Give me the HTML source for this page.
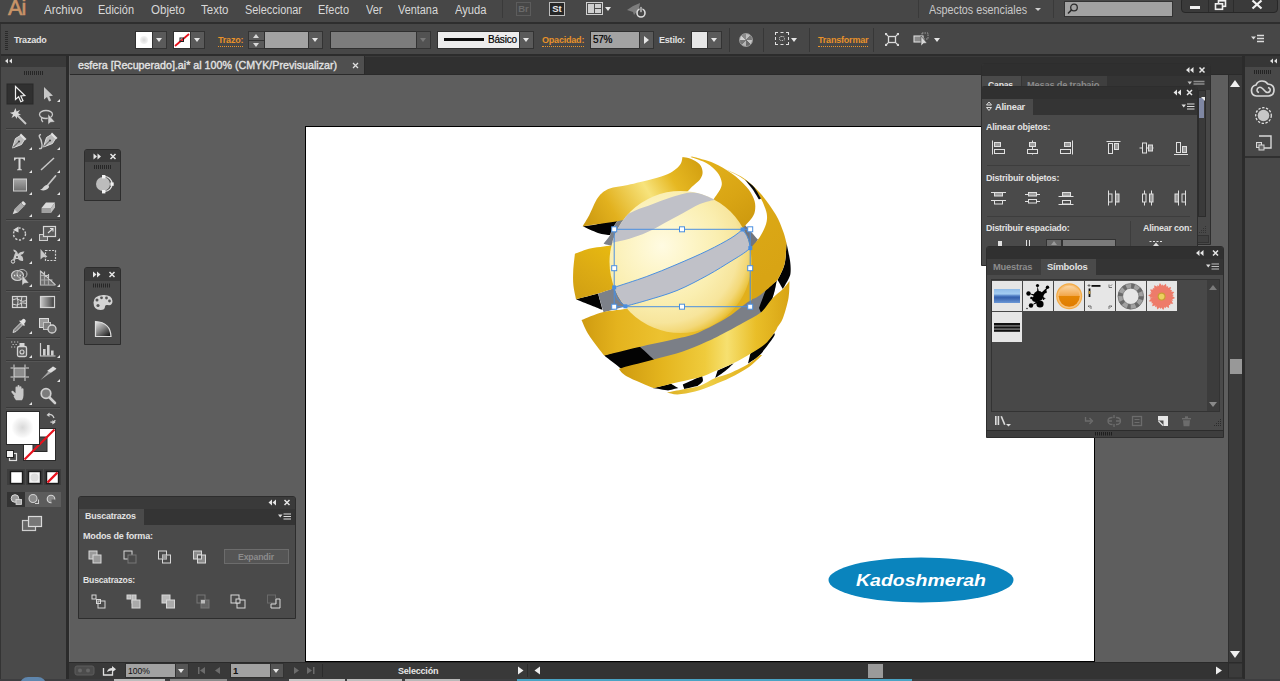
<!DOCTYPE html>
<html lang="es">
<head>
<meta charset="utf-8">
<title>Adobe Illustrator - esfera</title>
<style>
*{box-sizing:border-box;margin:0;padding:0}
html,body{width:1280px;height:681px;overflow:hidden;background:#5e5e5e;font-family:"Liberation Sans","DejaVu Sans",sans-serif;color:#dcdcdc;font-size:11px}
.abs{position:absolute}
#root{position:relative;width:1280px;height:681px;overflow:hidden;background:#5e5e5e}
/* menu bar */
#menubar{left:0;top:0;width:1280px;height:23px;background:#474747}
#menubar .mi{position:absolute;top:3px;font-size:12px;color:#d8d8d8;line-height:15px;white-space:nowrap;transform-origin:0 50%;display:inline-block}
#mline{left:0;top:22px;width:1280px;height:2px;background:#2e2e2e}
#ctrlbar{left:0;top:24px;width:1280px;height:31px;background:#474747}
#cline{left:0;top:54px;width:1280px;height:2px;background:#2c2c2c}
.lbl{position:absolute;transform-origin:0 50%;display:inline-block;font-size:9px;color:#e2e2e2;white-space:nowrap;line-height:12px;font-weight:bold;letter-spacing:-0.2px}
.olbl{position:absolute;transform-origin:0 50%;display:inline-block;font-size:9px;color:#e8922a;white-space:nowrap;line-height:12px;font-weight:bold;border-bottom:1px dotted #e8922a;letter-spacing:-0.2px}
.btn{position:absolute;background:#5a5a5a;border:1px solid #333}
.inp{position:absolute;background:#a3a3a3;border:1px solid #2f2f2f}
.tri-d{position:absolute;width:0;height:0;border-left:4px solid transparent;border-right:4px solid transparent;border-top:5px solid #e6e6e6}
.vsep{position:absolute;width:1px;background:#373737;top:28px;height:24px}
/* tab bar */
#tabbar{left:70px;top:56px;width:1173px;height:19px;background:#303030;border-top:1px solid #3a3a3a;border-bottom:1px solid #2a2a2a}
#tab{left:70px;top:56px;width:295px;height:18px;background:#4f4f4f;border-right:1px solid #2a2a2a}
/* toolbar */
#tools{left:0;top:56px;width:66px;height:625px;background:#4a4a4a}
#toolsb{left:66px;top:56px;width:3px;height:625px;background:#2b2b2b}
#toolsh{left:69px;top:75px;width:1px;height:587px;background:#686868}
#toolshead{left:0;top:56px;width:66px;height:11px;background:#3a3a3a}
.tsep{position:absolute;left:6px;width:54px;height:1px;background:#3b3b3b;border-bottom:1px solid #555}
/* artboard */
#art{left:305px;top:126px;width:790px;height:536px;background:#fff;border:1px solid #000}
/* panels */
.panel{position:absolute;background:#4a4a4a;border:1px solid #2d2d2d}
.phead{position:absolute;left:0;top:0;right:0;height:11px;background:#3a3a3a}
.ptabs{position:absolute;left:0;right:0;background:#3c3c3c}
.ptab{position:absolute;background:#4a4a4a;color:#e2e2e2;font-size:9.5px;font-weight:bold;line-height:14px;white-space:nowrap}
.ptxt{position:absolute;transform-origin:0 50%;display:inline-block;font-size:9.5px;color:#e2e2e2;white-space:nowrap;line-height:12px;font-weight:bold;letter-spacing:-0.2px}
svg{position:absolute;overflow:visible}
</style>
</head>
<body>
<div id="root">
<!--CANVAS-->
<!--ARTBOARD-->
<div id="art" class="abs"></div>
<!--ART-->
<svg id="artsvg" style="left:0;top:0" width="1280" height="681" viewBox="0 0 1280 681">
<defs>
<linearGradient id="bk1" gradientUnits="userSpaceOnUse" x1="583" y1="0" x2="622" y2="0"><stop offset="0" stop-color="#000"/><stop offset=".7" stop-color="#0a0a0a"/><stop offset="1" stop-color="#6d7077"/></linearGradient>
<linearGradient id="bk2" gradientUnits="userSpaceOnUse" x1="577" y1="0" x2="622" y2="0"><stop offset="0" stop-color="#000"/><stop offset=".45" stop-color="#060606"/><stop offset=".6" stop-color="#7b7f87"/><stop offset="1" stop-color="#8e9299"/></linearGradient>
<linearGradient id="bk3" gradientUnits="userSpaceOnUse" x1="604" y1="0" x2="778" y2="0"><stop offset="0" stop-color="#000"/><stop offset=".2" stop-color="#050505"/><stop offset=".3" stop-color="#7a7e86"/><stop offset=".9" stop-color="#7d8189"/><stop offset=".93" stop-color="#050505"/><stop offset="1" stop-color="#000"/></linearGradient>
<linearGradient id="gR1" gradientUnits="userSpaceOnUse" x1="585" y1="230" x2="700" y2="160"><stop offset="0" stop-color="#c9960e"/><stop offset=".25" stop-color="#e2b11e"/><stop offset=".55" stop-color="#f7e37c"/><stop offset=".75" stop-color="#e6b822"/><stop offset="1" stop-color="#d29f10"/></linearGradient>
<linearGradient id="gR2" gradientUnits="userSpaceOnUse" x1="700" y1="160" x2="755" y2="240"><stop offset="0" stop-color="#e3b21c"/><stop offset=".5" stop-color="#d9a514"/><stop offset="1" stop-color="#c8940c"/></linearGradient>
<linearGradient id="gR3" gradientUnits="userSpaceOnUse" x1="700" y1="158" x2="785" y2="260"><stop offset="0" stop-color="#e8bb28"/><stop offset=".5" stop-color="#dca916"/><stop offset="1" stop-color="#d8a414"/></linearGradient>
<linearGradient id="gR3b" gradientUnits="userSpaceOnUse" x1="752" y1="0" x2="782" y2="0"><stop offset="0" stop-color="#d09c0e"/><stop offset=".6" stop-color="#e4b41e"/><stop offset="1" stop-color="#dcaa18"/></linearGradient>
<linearGradient id="gL1" gradientUnits="userSpaceOnUse" x1="574" y1="300" x2="612" y2="246"><stop offset="0" stop-color="#cf9e12"/><stop offset=".5" stop-color="#dcab14"/><stop offset="1" stop-color="#e8ba10"/></linearGradient>
<linearGradient id="gL2" gradientUnits="userSpaceOnUse" x1="582" y1="0" x2="758" y2="0"><stop offset="0" stop-color="#cf9b10"/><stop offset=".2" stop-color="#e4b31e"/><stop offset=".45" stop-color="#ecc230"/><stop offset="1" stop-color="#e0ad18"/></linearGradient>
<linearGradient id="gL3" gradientUnits="userSpaceOnUse" x1="620" y1="0" x2="790" y2="0"><stop offset="0" stop-color="#cf9b10"/><stop offset=".25" stop-color="#e4b51e"/><stop offset=".5" stop-color="#efcb3c"/><stop offset=".63" stop-color="#f6e070"/><stop offset=".8" stop-color="#e9be28"/><stop offset="1" stop-color="#d8a414"/></linearGradient>
<linearGradient id="gL4" gradientUnits="userSpaceOnUse" x1="650" y1="0" x2="790" y2="0"><stop offset="0" stop-color="#d6a212"/><stop offset=".4" stop-color="#efcf48"/><stop offset=".7" stop-color="#e3b21e"/><stop offset="1" stop-color="#d8a414"/></linearGradient>
<radialGradient id="sph" gradientUnits="userSpaceOnUse" cx="662" cy="246" r="96"><stop offset="0" stop-color="#fffbe2"/><stop offset=".3" stop-color="#fdf5c8"/><stop offset=".6" stop-color="#faeeb0"/><stop offset=".8" stop-color="#f7e59c"/><stop offset=".9" stop-color="#f3d878"/><stop offset=".96" stop-color="#ecc84a"/><stop offset="1" stop-color="#e6b92e"/></radialGradient>
<clipPath id="cclip"><circle cx="680.5" cy="262" r="71"/></clipPath>
</defs>
<path d="M582.6 226.3 C585.2 225.9 591.8 225.5 598.0 224.0 C604.2 222.5 616.3 218.6 620.0 217.5 L620.0 217.5 C618.7 219.3 614.0 225.6 612.4 228.5 C610.8 231.4 610.6 234.0 610.2 235.1 L610.2 235.1 C608.2 234.7 602.6 234.4 598.0 232.9 C593.4 231.4 585.2 227.4 582.6 226.3 Z" fill="#030303" />
<path d="M620.0 217.5 C618.7 219.3 614.0 225.6 612.4 228.5 C610.8 231.4 611.7 232.5 610.2 235.1 C608.7 237.7 604.7 242.4 603.6 243.8 L603.6 243.8 C605.5 244.3 613.0 246.4 614.9 246.9 L614.9 246.9 C615.5 244.4 616.7 236.5 618.6 231.8 C620.5 227.0 624.9 220.7 626.1 218.5 L626.1 218.5 C625.1 218.3 621.0 217.7 620.0 217.5 Z" fill="#7d8189" />
<path d="M576.0 299.3 C579.7 298.3 594.3 294.5 598.0 293.5 L598.0 293.5 C598.8 296.2 601.8 307.2 602.5 310.0 L602.5 310.0 C600.6 309.3 595.8 307.4 591.4 305.6 C587.0 303.8 578.6 300.4 576.0 299.3 Z" fill="#030303" />
<path d="M598.0 293.5 C601.3 292.4 614.4 288.1 617.7 287.0 L617.7 287.0 C618.2 288.6 618.7 293.1 620.5 296.2 C622.2 299.3 626.8 303.9 628.1 305.4 L628.1 305.4 C624.0 306.6 607.7 311.1 603.6 312.2 L603.6 312.2 C602.7 309.1 598.9 296.6 598.0 293.5 Z" fill="#7d8189" />
<path d="M604.2 353.0 C609.8 351.5 627.1 346.3 638.0 344.0 C648.9 341.7 659.3 341.5 669.4 339.0 C679.5 336.5 689.0 333.2 698.8 329.0 C708.6 324.8 719.2 319.2 728.0 314.0 C736.8 308.8 745.3 302.1 751.6 298.0 C757.9 293.9 761.8 292.5 766.0 289.6 C770.2 286.7 774.9 282.3 776.7 280.8 L776.7 280.8 C776.0 283.7 774.8 292.7 772.3 298.4 C769.8 304.1 763.7 312.2 762.0 315.0 L762.0 315.0 C758.8 316.8 750.9 321.5 742.8 326.0 C734.7 330.5 723.3 337.2 713.5 342.0 C703.7 346.8 693.5 351.2 684.0 354.5 C674.5 357.8 667.0 359.6 656.6 362.0 C646.2 364.4 627.5 367.8 621.7 369.0 L621.7 369.0 C618.8 366.3 607.1 355.7 604.2 353.0 Z" fill="#7b7f87" />
<path d="M604.2 355.5 C609.8 353.8 632.4 346.8 638.0 345.0 L638.0 345.0 C641.1 347.8 653.5 359.2 656.6 362.0 L656.6 362.0 C650.8 363.2 627.5 367.8 621.7 369.0 L621.7 369.0 C618.8 366.8 607.1 357.8 604.2 355.5 Z" fill="#030303" />
<path d="M766.0 289.6 C767.8 288.1 774.9 282.3 776.7 280.8 L776.7 280.8 C776.0 283.7 774.8 292.7 772.3 298.4 C769.8 304.1 763.7 312.2 762.0 315.0 L762.0 315.0 C761.5 313.8 759.5 309.2 759.0 308.0 L759.0 308.0 C760.2 304.9 764.8 292.7 766.0 289.6 Z" fill="#030303" />
<path d="M745.0 225.0 C747.2 227.4 755.8 237.2 758.0 239.6 L758.0 239.6 C757.0 241.3 753.0 248.3 752.0 250.0 L748.1 250.7 C747.6 248.8 746.3 243.3 745.2 239.3 C744.1 235.4 742.1 229.0 741.5 227.0 Z" fill="#71757d" />
<path d="M786.5 243.0 C787.1 245.9 789.3 255.7 790.0 260.5 C790.7 265.3 790.8 269.1 790.6 272.0 C790.4 274.9 790.3 275.2 789.0 278.0 C787.7 280.8 783.9 287.2 782.9 289.0 L782.9 289.0 C782.0 287.5 778.5 281.5 777.6 280.0 L777.6 280.0 C778.8 277.3 783.1 270.2 784.6 264.0 C786.1 257.8 786.2 246.5 786.5 243.0 Z" fill="#030303" />
<path d="M652.7 388.1 C655.8 387.4 668.0 384.4 671.0 383.7 L671.0 383.7 C672.2 384.4 677.2 387.4 678.4 388.1 L678.4 388.1 C676.7 388.5 669.8 390.2 668.1 390.6 L668.1 390.6 C665.5 390.2 655.3 388.5 652.7 388.1 Z" fill="#030303" />
<path d="M682.8 384.5 C686.0 383.0 698.8 377.2 702.0 375.7 L702.0 375.7 C702.1 376.6 703.5 379.6 702.8 381.3 C702.0 383.0 698.4 385.2 697.5 386.0 L697.5 386.0 C695.3 386.5 686.5 388.5 684.3 389.0 L684.3 389.0 C684.0 388.2 683.0 385.2 682.8 384.5 Z" fill="#030303" />
<path d="M717.6 370.5 C720.3 369.2 731.3 364.2 734.0 362.9 L734.0 362.9 C732.6 364.2 728.9 368.0 725.8 370.5 C722.7 373.0 717.0 376.8 715.2 378.0 L715.2 378.0 C715.6 376.8 717.2 371.8 717.6 370.5 Z" fill="#030303" />
<path d="M750.4 353.5 C752.8 351.8 761.0 346.4 765.0 343.0 C769.0 339.6 772.9 334.7 774.5 333.0 L774.5 333.0 C774.3 333.8 775.8 333.9 773.3 337.6 C770.8 341.3 764.0 350.7 759.8 355.0 C755.6 359.3 750.0 362.1 748.0 363.5 L748.0 363.5 C748.4 361.8 750.0 355.2 750.4 353.5 Z" fill="#030303" />
<path d="M682.5 157.0 C682.2 158.0 682.1 161.2 681.0 163.2 C679.9 165.2 678.1 167.2 675.9 169.0 C673.7 170.8 671.9 172.3 668.0 174.0 C664.1 175.7 659.2 177.2 652.5 179.0 C645.8 180.8 635.0 183.4 627.8 185.0 C620.5 186.6 614.0 186.7 609.0 188.8 C604.0 190.9 601.3 193.2 598.0 197.6 C594.7 202.0 591.8 210.5 589.2 215.3 C586.6 220.1 583.7 224.5 582.6 226.3 L582.6 226.3 C585.2 225.9 591.2 225.1 598.0 224.0 C604.8 222.9 617.4 221.6 623.2 219.9 C629.0 218.1 628.6 216.3 632.8 213.6 C637.0 211.0 642.4 206.7 648.2 204.0 C654.1 201.3 661.7 198.7 667.8 197.2 C673.8 195.7 681.7 195.4 684.5 195.0 L684.5 195.0 C685.7 193.6 689.4 189.3 692.0 186.7 C694.6 184.1 698.2 181.8 700.0 179.4 C701.8 177.0 702.7 174.6 702.6 172.0 C702.5 169.4 701.4 166.2 699.4 164.0 C697.4 161.8 693.4 160.0 690.6 158.8 C687.8 157.6 683.9 157.3 682.5 157.0 Z" fill="url(#gR1)" />
<path d="M690.6 157.0 C693.3 158.0 702.3 160.7 706.7 163.2 C711.1 165.7 714.5 169.1 717.0 172.0 C719.5 174.9 720.8 178.1 721.4 180.8 C722.0 183.5 722.2 184.8 720.7 188.2 C719.2 191.6 713.6 199.1 712.2 201.2 L712.2 201.2 C714.5 203.0 721.9 207.6 726.0 211.7 C730.2 215.7 734.3 222.9 737.1 225.6 C739.9 228.3 741.9 227.5 742.9 227.9 L742.9 227.9 C744.4 226.2 750.1 220.7 752.2 217.5 C754.3 214.3 755.0 211.9 755.2 208.7 C755.5 205.5 755.2 202.2 753.7 198.5 C752.2 194.8 750.1 190.9 746.4 186.7 C742.7 182.5 737.1 177.4 731.7 173.5 C726.3 169.6 720.6 166.0 714.0 163.2 C707.4 160.4 695.7 157.7 692.0 156.6 L692.0 156.6 C691.8 156.7 690.8 156.9 690.6 157.0 Z" fill="url(#gR2)" />
<path d="M726.0 169.5 C728.9 170.9 737.6 173.9 743.4 178.0 C749.2 182.1 755.6 187.9 761.0 194.0 C766.4 200.1 772.0 208.4 775.7 214.6 C779.4 220.8 781.2 226.3 783.0 231.0 C784.8 235.7 785.9 241.0 786.5 243.0 L786.5 243.0 C786.2 246.5 786.1 257.8 784.6 264.0 C783.1 270.2 778.8 277.3 777.6 280.0 L777.6 280.0 C775.8 281.6 770.5 286.7 767.0 289.6 C763.5 292.5 760.1 295.6 756.4 297.5 C752.7 299.4 746.6 300.4 744.6 300.9 L744.6 300.9 C745.0 298.9 746.6 293.4 747.3 288.5 C747.9 283.6 748.4 277.8 748.5 271.4 C748.7 265.1 748.1 254.1 748.1 250.7 L748.1 250.7 C749.7 248.8 755.3 243.2 758.0 239.6 C760.7 236.0 762.5 232.7 764.0 229.3 C765.5 225.9 766.8 222.4 767.0 219.0 C767.2 215.6 766.9 212.9 765.4 208.7 C763.9 204.5 761.4 198.8 758.0 194.0 C754.6 189.2 750.2 184.1 744.9 180.0 C739.6 175.9 729.1 171.2 726.0 169.5 Z" fill="url(#gR3)" />
<path d="M744.9 179.4 C746.4 180.6 751.0 183.5 753.7 186.7 C756.4 189.9 759.8 196.5 761.0 198.5 L761.0 198.5 C760.7 198.7 759.3 199.3 759.0 199.5 L759.0 199.5 C757.8 197.7 754.4 191.8 752.0 188.5 C749.6 185.2 746.1 180.9 744.9 179.4 Z" fill="#0a0a0a" />
<path d="M574.9 253.8 C577.6 252.9 584.9 249.7 591.4 248.3 C597.9 246.9 610.1 245.7 613.9 245.2 L613.9 245.2 C613.8 248.0 613.0 256.4 613.2 262.0 C613.4 267.6 614.6 274.8 615.4 279.0 C616.1 283.2 617.3 285.7 617.7 287.0 L617.7 287.0 C614.4 288.1 605.0 291.5 598.0 293.5 C591.0 295.5 579.7 298.3 576.0 299.3 L576.0 299.3 C575.6 297.0 573.9 290.3 573.4 285.6 C572.9 280.9 573.0 276.5 573.2 271.2 C573.5 265.9 574.6 256.7 574.9 253.8 Z" fill="url(#gL1)" />
<path d="M581.5 320.0 C585.0 318.7 595.3 314.1 602.5 312.2 C609.7 310.3 611.6 310.9 624.5 308.9 C637.4 306.9 658.8 307.8 680.0 300.0 C701.2 292.2 740.0 268.3 752.0 262.0 L752.0 262.0 C752.0 268.3 752.0 293.7 752.0 300.0 L752.0 300.0 C751.0 300.6 749.8 300.7 745.8 303.5 C741.8 306.3 735.8 312.2 728.0 317.0 C720.2 321.8 707.6 328.7 698.8 332.4 C690.0 336.1 685.1 336.5 675.0 339.0 C664.9 341.5 649.8 344.4 638.0 347.2 C626.2 349.9 609.8 354.1 604.2 355.5 L604.2 355.5 C601.6 352.1 592.6 340.8 588.8 334.9 C585.0 329.0 582.7 322.5 581.5 320.0 Z" fill="url(#gL2)" />
<path d="M618.9 369.0 C620.5 368.5 622.2 367.8 628.5 366.1 C634.8 364.4 647.4 361.2 656.4 358.8 C665.4 356.4 674.7 354.1 682.8 351.4 C690.9 348.7 698.7 345.3 704.9 342.6 C711.1 339.9 713.7 338.6 720.0 335.3 C726.3 332.0 736.0 326.7 742.8 322.9 C749.6 319.1 755.9 316.6 760.8 312.5 C765.7 308.4 768.6 302.3 772.3 298.4 C776.0 294.5 780.0 291.9 782.9 289.0 C785.8 286.1 788.4 282.3 789.5 281.0 L789.5 281.0 C789.3 283.8 789.6 291.8 788.5 298.0 C787.4 304.2 784.8 313.2 783.0 318.0 C781.2 322.8 778.4 325.5 777.5 327.0 L777.5 327.0 C777.1 327.8 777.0 328.9 775.0 331.7 C773.0 334.4 769.6 340.0 765.7 343.5 C761.8 347.0 757.1 349.6 751.6 352.9 C746.1 356.2 738.7 360.6 732.8 363.5 C726.9 366.4 721.5 368.4 716.4 370.5 C711.3 372.6 708.6 374.5 702.3 376.4 C696.0 378.3 686.9 380.1 678.8 382.0 C670.7 383.9 657.7 387.1 653.5 388.1 L653.5 388.1 C649.1 386.2 632.8 379.6 627.0 376.4 C621.2 373.2 620.2 370.2 618.9 369.0 Z" fill="url(#gL3)" />
<path d="M762.2 355.0 C760.0 357.0 754.3 363.2 749.0 367.0 C743.7 370.8 736.5 374.6 730.5 377.6 C724.5 380.6 718.8 382.9 712.9 385.2 C707.0 387.5 700.9 390.1 695.0 391.6 C689.1 393.1 682.3 394.2 677.6 394.4 C672.9 394.5 668.8 392.8 667.0 392.5 L667.0 392.5 C669.8 392.0 678.0 390.4 683.5 389.3 C689.0 388.2 694.7 387.7 700.0 385.8 C705.3 383.9 710.1 380.1 715.2 378.0 C720.3 375.9 724.9 375.3 730.5 372.9 C736.1 370.5 744.1 366.5 749.0 363.5 C753.9 360.5 758.0 356.4 759.8 355.0 L759.8 355.0 C760.2 355.0 761.8 355.0 762.2 355.0 Z" fill="url(#gL4)" />
<g clip-path="url(#cclip)"><path d="M600 180 H760 V340 H600Z" fill="url(#sph)"/>
<path d="M606.0 232.0 C607.2 230.3 610.3 224.5 613.0 222.0 C615.7 219.5 618.6 218.9 622.3 217.0 C626.0 215.1 630.2 212.7 635.3 210.5 C640.4 208.3 647.0 206.2 652.9 204.0 C658.8 201.8 665.2 199.3 670.5 197.6 C675.8 195.8 680.7 194.3 684.6 193.5 C688.5 192.7 690.5 192.4 694.0 192.6 C697.5 192.8 702.1 193.7 705.8 194.8 C709.5 196.0 714.3 198.7 716.0 199.5 L716.0 199.5 C713.3 200.2 705.5 201.7 699.9 204.0 C694.3 206.3 688.2 210.3 682.3 213.5 C676.4 216.7 670.5 219.8 664.6 222.9 C658.7 226.0 652.9 229.7 647.0 232.3 C641.1 235.0 635.3 237.0 629.4 238.8 C623.5 240.6 616.4 241.7 611.8 242.9 C607.2 244.1 603.6 245.5 602.0 246.0 L602.0 246.0 C602.7 243.7 605.3 234.3 606.0 232.0 Z" fill="#c0c1c8"/>
<path d="M612.0 288.0 C617.7 286.1 635.4 280.6 646.2 276.7 C657.0 272.8 666.7 268.7 677.0 264.3 C687.3 259.9 698.9 254.9 707.9 250.5 C716.9 246.1 725.0 241.8 731.0 238.1 C737.0 234.3 741.8 229.7 744.0 228.0 L744.0 228.0 C745.7 231.2 752.3 243.8 754.0 247.0 L754.0 247.0 C752.2 248.1 747.1 251.1 743.3 253.5 C739.5 255.9 736.9 257.6 731.0 261.2 C725.1 264.8 716.9 270.2 707.9 275.1 C698.9 280.0 687.3 286.3 677.0 290.5 C666.7 294.7 654.8 297.9 646.2 300.5 C637.6 303.1 628.9 305.1 625.4 306.0 L625.4 306.0 C624.0 304.7 619.2 301.2 617.0 298.2 C614.8 295.2 612.8 289.7 612.0 288.0 Z" fill="#c0c1c8"/></g>
<g fill="none" stroke="#4a8fe0" stroke-width="1"><rect x="614.2" y="229.300" width="136" height="77.400"/><path d="M614.2 287.4 C619.5 285.6 635.7 280.5 646.2 276.7 C656.7 272.9 666.7 268.7 677.0 264.3 C687.3 259.9 698.9 254.9 707.9 250.5 C716.9 246.1 725.2 241.6 731.0 238.1 C736.8 234.6 740.7 230.9 742.6 229.5 L742.6 229.5 C743.5 230.9 746.7 234.9 748.0 238.0 C749.3 241.1 749.9 246.4 750.3 248.1 L750.3 248.1 C749.1 249.0 746.5 251.3 743.3 253.5 C740.1 255.7 736.9 257.6 731.0 261.2 C725.1 264.8 716.9 270.2 707.9 275.1 C698.9 280.0 687.3 286.3 677.0 290.5 C666.7 294.7 654.8 297.9 646.2 300.5 C637.6 303.1 628.9 305.3 625.4 306.3 L625.4 306.3 C624.0 304.9 618.9 301.4 617.0 298.2 C615.1 295.0 614.7 289.2 614.2 287.4 Z"/></g><g fill="#fff" stroke="#4a8fe0" stroke-width="1"><rect x="611.7" y="226.8" width="5" height="5"/><rect x="679.5" y="226.8" width="5" height="5"/><rect x="747.7" y="226.8" width="5" height="5"/><rect x="611.7" y="265.7" width="5" height="5"/><rect x="747.7" y="265.7" width="5" height="5"/><rect x="611.7" y="304.2" width="5" height="5"/><rect x="679.5" y="304.2" width="5" height="5"/><rect x="747.7" y="304.2" width="5" height="5"/></g><g fill="#4a8fe0"><rect x="740.6" y="227.5" width="4" height="4"/><rect x="748.3" y="246.1" width="4" height="4"/><rect x="623.4" y="304.3" width="4" height="4"/><rect x="612.2" y="285.4" width="4" height="4"/></g>
<ellipse cx="921" cy="580" rx="92.500" ry="22.500" fill="#0a84bd"/>
<text x="921" y="586" text-anchor="middle" font-family="'Liberation Sans','DejaVu Sans',sans-serif" font-size="17" font-weight="bold" font-style="italic" fill="#fff" textLength="130" lengthAdjust="spacingAndGlyphs">Kadoshmerah</text>
</svg>
<!--/ART-->
<!--TOPBARS-->
<div id="menubar" class="abs">
 <div class="abs" style="left:8px;top:-4px;font-size:21.5px;line-height:24px;color:#c89468;letter-spacing:-0.8px;-webkit-text-stroke:0.6px #c89468">Ai</div>
 <span class="mi" style="left:44px;transform:scaleX(0.965)">Archivo</span>
 <span class="mi" style="left:98px;transform:scaleX(0.915)">Edición</span>
 <span class="mi" style="left:151px;transform:scaleX(0.961)">Objeto</span>
 <span class="mi" style="left:201px;transform:scaleX(0.958)">Texto</span>
 <span class="mi" style="left:245px;transform:scaleX(0.909)">Seleccionar</span>
 <span class="mi" style="left:318px;transform:scaleX(0.911)">Efecto</span>
 <span class="mi" style="left:366px;transform:scaleX(0.916)">Ver</span>
 <span class="mi" style="left:398px;transform:scaleX(0.908)">Ventana</span>
 <span class="mi" style="left:455px;transform:scaleX(0.932)">Ayuda</span>
 <div class="abs" style="left:502px;top:0;width:1px;height:18px;background:#3a3a3a"></div>
 <div class="abs" style="left:516px;top:2px;width:15px;height:14px;border:1px solid #5c5c5c;color:#6a6a6a;font-size:9.5px;font-weight:bold;line-height:12px;text-align:center">Br</div>
 <div class="abs" style="left:549px;top:2px;width:16px;height:14px;border:1px solid #bdbdbd;background:#262626;color:#e8e8e8;font-size:9.5px;font-weight:bold;line-height:12px;text-align:center">St</div>
 <div class="abs" style="left:586px;top:2px;width:17px;height:13px;border:1px solid #d0d0d0;background:#4c4c4c">
   <div class="abs" style="left:1px;top:1px;width:6px;height:9px;background:#cfcfcf"></div>
   <div class="abs" style="left:8px;top:1px;width:6px;height:4px;background:#cfcfcf"></div>
   <div class="abs" style="left:8px;top:6px;width:6px;height:4px;background:#cfcfcf"></div>
 </div>
 <div class="tri-d" style="left:605px;top:7px;border-left-width:3.5px;border-right-width:3.5px;border-top-width:4px"></div>
 <svg style="left:625px;top:1px" width="22" height="18" viewBox="0 0 22 18">
   <path d="M2 9 L8 5 L15 2 L14 8 L9 14 L8 11 L5 10 Z" fill="#7d7d7d"/>
   <circle cx="16" cy="12" r="4" fill="none" stroke="#dcdcdc" stroke-width="1.6"/>
   <rect x="15" y="5.5" width="2" height="6" fill="#dcdcdc" stroke="#474747" stroke-width="0.8"/>
 </svg>
 <div class="abs" style="left:918px;top:0;width:1px;height:18px;background:#3a3a3a"></div>
 <span class="mi" style="left:929px;color:#c9c9c9;transform:scaleX(0.896)">Aspectos esenciales</span>
 <div class="tri-d" style="left:1035px;top:8px;border-left-width:3px;border-right-width:3px;border-top-width:3px;border-top-color:#cfcfcf"></div>
 <div class="abs" style="left:1053px;top:0;width:1px;height:18px;background:#3a3a3a"></div>
 <div class="abs" style="left:1064px;top:1px;width:109px;height:16px;background:#a2a2a2;border:1px solid #333"></div>
 <svg style="left:1066px;top:2px" width="14" height="14" viewBox="0 0 14 14"><circle cx="8" cy="5.5" r="3.3" fill="none" stroke="#2b2b2b" stroke-width="1.3"/><path d="M5.6 7.9 L2 11.5" stroke="#2b2b2b" stroke-width="1.6"/></svg>
 <div class="abs" style="left:1181px;top:-3px;width:97px;height:16px;background:#3a3a3a;border:1px solid #272727;border-radius:4px"></div>
 <div class="abs" style="left:1208px;top:0;width:1px;height:12px;background:#2c2c2c"></div>
 <div class="abs" style="left:1233px;top:0;width:1px;height:12px;background:#2c2c2c"></div>
 <div class="abs" style="left:1190px;top:6px;width:10px;height:3px;background:#f2f2f2"></div>
 <svg style="left:1214px;top:0" width="14" height="11" viewBox="0 0 14 11"><rect x="4.5" y="0.8" width="7" height="5.5" fill="none" stroke="#f0f0f0" stroke-width="1.6"/><rect x="1.5" y="3.8" width="7" height="5.5" fill="#3a3a3a" stroke="#f0f0f0" stroke-width="1.6"/></svg>
 <svg style="left:1251px;top:0" width="12" height="10" viewBox="0 0 12 10"><path d="M1.5 0.5 L10.5 8.5 M10.5 0.5 L1.5 8.5" stroke="#f2f2f2" stroke-width="2.2"/></svg>
</div>
<div id="mline" class="abs"></div>
<div id="ctrlbar" class="abs">
 <div class="abs" style="left:5px;top:7px;width:3px;height:19px;background:repeating-linear-gradient(#2a2a2a 0 1px,transparent 1px 2px)"></div>
</div>
<span class="lbl" style="left:14px;top:34px">Trazado</span>
<!-- fill swatch -->
<div class="abs" style="left:135px;top:31px;width:18px;height:18px;background:#fff;border:1px solid #2f2f2f"></div>
<div class="abs" style="left:140px;top:36px;width:8px;height:8px;border-radius:4px;background:radial-gradient(#d8d8d8,#fff)"></div>
<div class="btn" style="left:152px;top:31px;width:15px;height:18px"></div><div class="tri-d" style="left:156px;top:38px;border-left-width:3.5px;border-right-width:3.5px;border-top-width:4px"></div>
<!-- stroke swatch -->
<div class="abs" style="left:173px;top:31px;width:18px;height:18px;background:#fff;border:1px solid #2f2f2f;overflow:hidden"><svg style="left:0;top:0" width="16" height="16" viewBox="0 0 16 16"><path d="M1 14 L15 2" stroke="#e8111c" stroke-width="1.8"/><rect x="6" y="6" width="3.5" height="3.5" fill="none" stroke="#222" stroke-width="1"/></svg></div>
<div class="btn" style="left:190px;top:31px;width:15px;height:18px"></div><div class="tri-d" style="left:194px;top:38px;border-left-width:3.5px;border-right-width:3.5px;border-top-width:4px"></div>
<span class="olbl" style="left:218px;top:34px">Trazo:</span>
<div class="btn" style="left:248px;top:31px;width:17px;height:18px"></div>
<div class="abs" style="left:249px;top:40px;width:15px;height:1px;background:#333"></div>
<div class="abs" style="left:253px;top:34px;width:0;height:0;border-left:3.5px solid transparent;border-right:3.5px solid transparent;border-bottom:4px solid #d8d8d8"></div>
<div class="tri-d" style="left:253px;top:43px;border-left-width:3.5px;border-right-width:3.5px;border-top-width:4px;border-top-color:#d8d8d8"></div>
<div class="inp" style="left:264px;top:31px;width:45px;height:18px"></div>
<div class="btn" style="left:308px;top:31px;width:15px;height:18px"></div><div class="tri-d" style="left:312px;top:38px;border-left-width:3.5px;border-right-width:3.5px;border-top-width:4px"></div>
<div class="inp" style="left:330px;top:31px;width:87px;height:18px;background:#7c7c7c"></div>
<div class="btn" style="left:416px;top:31px;width:15px;height:18px;background:#525252"></div><div class="tri-d" style="left:420px;top:38px;border-left-width:3.5px;border-right-width:3.5px;border-top-width:4px;border-top-color:#777"></div>
<div class="inp" style="left:437px;top:31px;width:83px;height:18px;background:#ececec"></div>
<div class="abs" style="left:444px;top:38px;width:40px;height:3px;background:#0c0c0c"></div>
<span class="abs" style="left:488px;top:34px;font-size:10px;color:#000;line-height:12px;letter-spacing:-0.2px;-webkit-text-stroke:.2px #000">Básico</span>
<div class="btn" style="left:519px;top:31px;width:15px;height:18px"></div><div class="tri-d" style="left:523px;top:38px;border-left-width:3.5px;border-right-width:3.5px;border-top-width:4px"></div>
<span class="olbl" style="left:542px;top:34px">Opacidad:</span>
<div class="inp" style="left:590px;top:31px;width:50px;height:18px"></div>
<span class="abs" style="left:593px;top:34px;font-size:10px;color:#000;line-height:12px;letter-spacing:-0.3px;-webkit-text-stroke:.2px #000">57%</span>
<div class="btn" style="left:639px;top:31px;width:15px;height:18px"></div>
<div class="abs" style="left:644px;top:36px;width:0;height:0;border-top:4px solid transparent;border-bottom:4px solid transparent;border-left:5px solid #e6e6e6"></div>
<span class="lbl" style="left:659px;top:34px">Estilo:</span>
<div class="abs" style="left:691px;top:31px;width:17px;height:18px;background:#e6e6e6;border:1px solid #2f2f2f"></div>
<div class="btn" style="left:707px;top:31px;width:15px;height:18px"></div><div class="tri-d" style="left:711px;top:38px;border-left-width:3.5px;border-right-width:3.5px;border-top-width:4px"></div>
<div class="vsep" style="left:729px"></div>
<div class="abs" style="left:739px;top:33px;width:14px;height:14px;border-radius:7px;background:conic-gradient(#bdbdbd 0 12%,#7a7a7a 12% 25%,#c6c6c6 25% 37%,#6a6a6a 37% 50%,#b5b5b5 50% 62%,#777 62% 75%,#d0d0d0 75% 87%,#8a8a8a 87% 100%);border:1px solid #9a9a9a"></div>
<div class="vsep" style="left:763px"></div>
<div class="abs" style="left:775px;top:32px;width:14px;height:13px;border:1px dashed #e0e0e0"></div>
<div class="abs" style="left:779px;top:36px;width:6px;height:5px;border:1px dotted #d0d0d0;border-radius:3px"></div>
<div class="tri-d" style="left:791px;top:38px;border-left-width:3.5px;border-right-width:3.5px;border-top-width:4px"></div>
<div class="vsep" style="left:809px"></div>
<span class="olbl" style="left:818px;top:34px">Transformar</span>
<div class="vsep" style="left:873px"></div>
<svg style="left:885px;top:33px" width="14" height="13" viewBox="0 0 14 13"><rect x="3.5" y="3.500" width="7" height="6" fill="none" stroke="#dcdcdc" stroke-width="1.300"/><path d="M0.500 0.500 L3 3 M13.500 0.500 L11 3 M0.500 12.500 L3 10 M13.500 12.500 L11 10" stroke="#dcdcdc" stroke-width="1.100"/><path d="M0 0 h2.500 l-2.500 2.500z M14 0 h-2.500 l2.500 2.500z M0 13 h2.500 l-2.500 -2.500z M14 13 h-2.500 l2.500 -2.500z" fill="#dcdcdc"/></svg>
<svg style="left:913px;top:32px" width="17" height="15" viewBox="0 0 17 15"><rect x="1" y="4" width="9" height="6" fill="#8a8a8a" stroke="#dcdcdc" stroke-width="1.1"/><rect x="9" y="1" width="6" height="6" fill="none" stroke="#9a9a9a" stroke-width="1" stroke-dasharray="1.5 1"/><path d="M8 4 L8 14 L10.5 11.5 L14 11 Z" fill="#d8d8d8" stroke="#474747" stroke-width="0.6"/></svg>
<div class="tri-d" style="left:934px;top:38px;border-left-width:3.5px;border-right-width:3.5px;border-top-width:4px"></div>
<svg style="left:1251px;top:34px" width="13" height="10" viewBox="0 0 13 10"><path d="M0 2.5 h5 l-2.5 3 z" fill="#dcdcdc"/><path d="M6 1.5 h7 M6 4.5 h7 M6 7.5 h7" stroke="#dcdcdc" stroke-width="1.3"/></svg>
<div id="cline" class="abs"></div>
<div id="tabbar" class="abs"></div>
<div id="tab" class="abs"></div>
<span class="abs" style="left:78px;top:59px;font-size:11px;line-height:13px;color:#e4e4e4;white-space:nowrap;-webkit-text-stroke:0.35px #e4e4e4;transform:scaleX(0.972);transform-origin:0 50%" id="tabtxt">esfera [Recuperado].ai* al 100% (CMYK/Previsualizar)</span>
<svg style="left:352px;top:62px" width="7" height="7" viewBox="0 0 7 7"><path d="M1 1 L6 6 M6 1 L1 6" stroke="#e0e0e0" stroke-width="1.3"/></svg>
<!--/TOPBARS-->
<!--TOOLBAR-->
<div id="tools" class="abs"></div>
<div id="toolshead" class="abs"></div>
<div id="toolsb" class="abs"></div>
<div id="toolsh" class="abs"></div>
<svg id="toolsvg" style="left:0;top:0" width="70" height="681" viewBox="0 0 70 681">
<defs>
<linearGradient id="gv" x1="0" y1="0" x2="0" y2="1"><stop offset="0" stop-color="#a8a8a8"/><stop offset="1" stop-color="#6e6e6e"/></linearGradient>
<linearGradient id="gh" x1="0" y1="0" x2="1" y2="0"><stop offset="0" stop-color="#c8c8c8"/><stop offset="1" stop-color="#3c3c3c"/></linearGradient>
<radialGradient id="gfill"><stop offset="0" stop-color="#d9d9d9"/><stop offset="0.8" stop-color="#f6f6f6"/><stop offset="1" stop-color="#fff"/></radialGradient>
</defs>
<!-- header -->
<path d="M8 58.5 l-3 2.5 l3 2.5 z M12 58.5 l-3 2.5 l3 2.5 z" fill="#e0e0e0"/>
<path d="M24 71h1v4h-1z M26 71h1v4h-1z M28 71h1v4h-1z M30 71h1v4h-1z M32 71h1v4h-1z M34 71h1v4h-1z M36 71h1v4h-1z M38 71h1v4h-1z M40 71h1v4h-1z M42 71h1v4h-1z" fill="#262626"/>
<!-- selected box -->
<rect x="7" y="84" width="26" height="20" fill="#303030" stroke="#292929"/>
<!-- tool corner triangles -->
<g fill="#e6e6e6" id="corners">
<path d="M60 102 v-3 l-3 3z"/>
<path d="M32 150 v-3 l-3 3z"/><path d="M60 150 v-3 l-3 3z"/>
<path d="M32 173 v-3 l-3 3z"/><path d="M60 173 v-3 l-3 3z"/>
<path d="M32 195 v-3 l-3 3z"/><path d="M60 195 v-3 l-3 3z"/>
<path d="M32 217 v-3 l-3 3z"/><path d="M60 217 v-3 l-3 3z"/>
<path d="M32 241 v-3 l-3 3z"/><path d="M60 241 v-3 l-3 3z"/>
<path d="M32 264 v-3 l-3 3z"/>
<path d="M32 287 v-3 l-3 3z"/><path d="M60 287 v-3 l-3 3z"/>
<path d="M32 334 v-3 l-3 3z"/>
<path d="M32 358 v-3 l-3 3z"/><path d="M60 358 v-3 l-3 3z"/>
<path d="M60 382 v-3 l-3 3z"/>
<path d="M32 405 v-3 l-3 3z"/>
</g>
<!-- separators -->
<g stroke="#3a3a3a" stroke-width="1"><path d="M6 128.5h54 M6 219.5h54 M6 290.5h54 M6 337.5h54 M6 360.5h54 M6 407.5h54"/></g>
<g stroke="#565656" stroke-width="1"><path d="M6 129.5h54 M6 220.5h54 M6 291.5h54 M6 338.5h54 M6 361.5h54 M6 408.5h54"/></g>
<!-- 1 selection -->
<path d="M15.5 86.5 L15.5 99.5 L18.6 96.8 L20.8 101.8 L23 100.8 L20.8 96 L24.8 95.6 Z" fill="#2c2c2c" stroke="#f0f0f0" stroke-width="1.2" stroke-linejoin="miter"/>
<!-- 2 direct selection -->
<path d="M44 87 L44 99.5 L47 97 L49 101.5 L51.2 100.5 L49.2 96.2 L53 95.8 Z" fill="#c6c6c6"/>
<!-- 3 magic wand -->
<path d="M17 115 L26 124" stroke="#c8c8c8" stroke-width="2"/>
<path d="M15.5 108 l1 3.5 l3.5 -1.5 l-2 3 l3 2 l-3.8 .3 l-.3 3.8 l-2 -3 l-3.4 1.8 l1.6 -3.4 l-3.2 -1.8 l3.8 -.6z" fill="#d8d8d8"/>
<!-- 4 lasso -->
<ellipse cx="46" cy="114.5" rx="6.5" ry="4" fill="none" stroke="#c8c8c8" stroke-width="1.3"/>
<path d="M42 117.5 q-1.5 2.5 1 4.500" fill="none" stroke="#c8c8c8" stroke-width="1.2"/>
<path d="M48 114 L48 124.5 L50.6 122.3 L55 122 Z" fill="#d2d2d2" stroke="#4a4a4a" stroke-width=".5"/>
<!-- 5 pen -->
<g transform="translate(19,141)"><path d="M-6.500 7 L-3.500 -2.500 L1.500 -5.500 L5.500 -1.500 L2.500 3.500 Z" fill="#b8b8b8" stroke="#dedede" stroke-width="1"/><path d="M2 -7.500 L7.500 -2 L5.800 -.6 L.600 -5.800z" fill="#e0e0e0"/><path d="M-6 6.500 L-.5 1" stroke="#4a4a4a" stroke-width="1"/><circle cx="0" cy=".5" r="1.100" fill="#4a4a4a"/></g>
<!-- 6 curvature pen -->
<g transform="translate(50,140)"><path d="M-6.500 7 L-3.500 -2.500 L1.500 -5.500 L5.500 -1.500 L2.500 3.500 Z" fill="#b8b8b8" stroke="#dedede" stroke-width="1"/><path d="M2 -7.500 L7.500 -2 L5.800 -.6 L.600 -5.800z" fill="#e0e0e0"/><path d="M-6 6.500 L-.5 1" stroke="#4a4a4a" stroke-width="1"/><circle cx="0" cy=".5" r="1.100" fill="#4a4a4a"/></g>
<path d="M39 148.500 q3.500 1 3 -4 q-.5 -5 -2.500 -7.500 q-1 -2 1.500 -2.500" fill="none" stroke="#c8c8c8" stroke-width="1.400"/>
<!-- 7 type -->
<path d="M14 157.500 h11 v3 h-1 q-.3 -1.700 -2 -1.700 h-1.500 v9.700 q0 1 1.500 1 v.8 h-5 v-.8 q1.500 0 1.500 -1 v-9.700 h-1.500 q-1.700 0 -2 1.700 h-1 z" fill="#d6d6d6"/>
<!-- 8 line -->
<path d="M41 170 L54 158" stroke="#c8c8c8" stroke-width="1.500"/>
<!-- 9 rect -->
<rect x="13.500" y="179" width="13" height="12" fill="url(#gv)" stroke="#cfcfcf" stroke-width="1"/>
<!-- 10 brush -->
<path d="M55.500 176 L47 186" stroke="#c4c4c4" stroke-width="1.800" stroke-linecap="round"/>
<path d="M47.500 185 q-2 -.5 -3.500 1.500 q-1.500 2.500 -4 3 q4 2 7.500 -.5 q2 -1.500 1.500 -3 z" fill="#d4d4d4"/>
<!-- 11 pencil -->
<g transform="translate(19,208) rotate(45)"><rect x="-2.200" y="-8" width="4.400" height="3" rx="1" fill="#e0e0e0"/><rect x="-2.200" y="-4.600" width="4.400" height="8.600" fill="#a8a8a8" stroke="#c8c8c8" stroke-width=".5"/><path d="M-2.200 4 L0 9 L2.200 4z" fill="#d8d8d8"/></g>
<!-- 12 eraser -->
<path d="M41.500 208 L46 202.500 L55 202.500 L51 208z" fill="#dadada"/><path d="M41.500 208 L51 208 L51 213 L41.500 213z" fill="#a0a0a0"/><path d="M51 208 L55 202.500 L55 207.500 L51 213z" fill="#bdbdbd"/>
<!-- 13 rotate -->
<circle cx="19.500" cy="234" r="6" fill="none" stroke="#cfcfcf" stroke-width="1.400" stroke-dasharray="2.200 1.600"/>
<path d="M13 230 l5.500 -3.500 l0 6z" fill="#d8d8d8"/>
<!-- 14 scale -->
<rect x="39.500" y="234.500" width="8" height="6" fill="#6a6a6a" stroke="#cfcfcf" stroke-width="1"/>
<rect x="43.500" y="226.500" width="12" height="10" fill="#5a5a5a" stroke="#d6d6d6" stroke-width="1.200"/>
<path d="M48 233 L53 228.500 M50 228.500 h3 v3" fill="none" stroke="#e0e0e0" stroke-width="1.100"/>
<!-- 15 warp -->
<path d="M13 262 q0 -5 2.500 -9.500 q-2.500 -1 -2 -3 q3.500 .5 4.500 4.500 q2 -3 6.500 -2.500 q-1 3 -4 3.500 q3.500 2 2.500 6 q-3 .5 -5 -2 q-2 -1.500 -5 3 z" fill="#c8c8c8"/>
<circle cx="13" cy="261.500" r="1.700" fill="#4a4a4a" stroke="#e0e0e0" stroke-width="1"/>
<circle cx="17" cy="257" r="1.500" fill="#4a4a4a" stroke="#e0e0e0" stroke-width=".9"/>
<!-- 16 free transform -->
<rect x="45.500" y="250.500" width="10" height="10" fill="none" stroke="#d0d0d0" stroke-width="1.200" stroke-dasharray="2 1.300"/>
<path d="M40.500 249 L40.500 259.500 L43 257.300 L47.500 257 Z" fill="#c8c8c8"/>
<!-- 17 shape builder -->
<ellipse cx="17.500" cy="275.500" rx="6" ry="5" fill="#7a7a7a" stroke="#cfcfcf" stroke-width="1.200"/>
<ellipse cx="22" cy="274" rx="5" ry="4.500" fill="none" stroke="#bdbdbd" stroke-width="1"/>
<path d="M14 275.500 h1.200 M16.800 275.500 h1.200 M19.600 275.500 h1.200" stroke="#e8e8e8" stroke-width="1.300"/>
<path d="M22 275 L22 285.500 L24.600 283.300 L29 283 Z" fill="#d4d4d4" stroke="#4a4a4a" stroke-width=".5"/>
<!-- 18 perspective grid -->
<path d="M40.500 270.500 v14.500 h15 M44.500 271.500 v13.500 M48.500 274 v11 M40.500 275.500 h8.500 M40.500 280 h12 M40.500 271 L55.500 285" fill="none" stroke="#c8c8c8" stroke-width="1.200"/>
<path d="M40.500 285 L40.500 272 L50 281 L55 285z" fill="#8a8a8a" opacity=".55"/>
<!-- 19 mesh -->
<rect x="12.500" y="296.500" width="14" height="11" fill="#5c5c5c" stroke="#d4d4d4" stroke-width="1.200"/>
<path d="M12.500 300 q4 -2.500 7 0 t7 .5 M12.500 304 q4 2 7 0 t7 -.5 M17 296.500 q2 5 0 11 M22 296.500 q-2 5 0 11" fill="none" stroke="#d4d4d4" stroke-width="1"/>
<!-- 20 gradient -->
<rect x="40.500" y="296.500" width="14" height="11" fill="url(#gh)" stroke="#d4d4d4" stroke-width="1.200"/>
<!-- 21 eyedropper -->
<path d="M13 332.500 l1 -3 l6.500 -6.500 l2 2 l-6.500 6.500 z" fill="#8a8a8a" stroke="#d4d4d4" stroke-width="1"/>
<path d="M19.500 321.500 l4.500 4.500 l1 -1 l-1 -1 l1.500 -2 q.8 -1.800 -.7 -2.800 q-1.300 -.8 -2.500 .3 l-1.500 1.500 l-1 -1 z" fill="#e2e2e2"/>
<!-- 22 blend -->
<rect x="39.500" y="318.500" width="9" height="9" fill="#9a9a9a" stroke="#dcdcdc" stroke-width="1"/>
<rect x="43.500" y="322.500" width="7" height="7" fill="#7c7c7c" stroke="#c4c4c4" stroke-width="1"/>
<circle cx="52" cy="329" r="4" fill="#6e6e6e" stroke="#d4d4d4" stroke-width="1.300"/>
<!-- 23 symbol sprayer -->
<rect x="17.500" y="346.500" width="9" height="10" rx="1.500" fill="#5a5a5a" stroke="#d4d4d4" stroke-width="1.300"/>
<rect x="19.500" y="343" width="5" height="3" fill="#d4d4d4"/>
<circle cx="22" cy="352" r="2" fill="none" stroke="#d4d4d4" stroke-width="1.100"/>
<path d="M11 342 h1.300 M14 342 h1.300 M17 342 h1.300 M12.500 344.500 h1.300 M15.500 344.500 h1.300 M11 347 h1.300 M14 347 h1.300" stroke="#bdbdbd" stroke-width="1.200"/>
<!-- 24 graph -->
<path d="M40.500 343 v13 h15" fill="none" stroke="#d0d0d0" stroke-width="1.200"/>
<rect x="43" y="349" width="2.600" height="6.500" fill="#d0d0d0"/><rect x="47" y="345" width="2.600" height="10.500" fill="#d0d0d0"/><rect x="51" y="350.500" width="2.600" height="5" fill="#d0d0d0"/>
<!-- 25 artboard -->
<rect x="14" y="368" width="11" height="9" fill="#8c8c8c" stroke="#d8d8d8" stroke-width="1"/>
<path d="M10.500 368 h3 M25.500 368 h3.500 M10.500 377 h3 M25.500 377 h3.500 M14 364.500 v3 M25 364.500 v3 M14 377.500 v3.500 M25 377.500 v3.500" stroke="#d8d8d8" stroke-width="1"/>
<!-- 26 slice -->
<path d="M40.500 380 L53 366.500 L56 369.500 L49 374 Z" fill="#a8a8a8"/><path d="M47 371 L53 366.500 L56.500 368.500 L51 372.500z" fill="#dcdcdc"/>
<!-- 27 hand -->
<path d="M14.500 396 l-2.500 -3 q-1.300 -1 -.3 -2 q1 -.6 2 .4 l1.800 1.800 v-5.500 q0 -1.200 1 -1.200 t1 1.200 v-1.500 q0 -1.200 1 -1.200 t1 1.200 v1.300 q0 -1.200 1 -1.200 t1 1.200 v1.800 q0 -1 1 -1 t1 1 v6 q0 3 -1.500 5 h-6 q-1.500 -1.500 -2.500 -4.300z" fill="#c8c8c8"/>
<!-- 28 zoom -->
<circle cx="46" cy="393.500" r="4.800" fill="#7c7c7c" stroke="#cfcfcf" stroke-width="1.700"/>
<path d="M49.500 397.500 L55 403" stroke="#cfcfcf" stroke-width="2.600" stroke-linecap="round"/>
<!-- stroke swatch -->
<rect x="23.500" y="428.500" width="32" height="32" fill="#fff" stroke="#2a2a2a" stroke-width="1"/>
<rect x="33" y="437" width="14" height="14.500" fill="#4a4a4a" stroke="#2a2a2a" stroke-width="1"/>
<path d="M24.500 459.500 L54.500 429.500" stroke="#e8111c" stroke-width="2.200"/>
<!-- fill swatch -->
<rect x="6.500" y="411.500" width="33" height="33" fill="#fff" stroke="#2a2a2a" stroke-width="1"/>
<circle cx="22.500" cy="427.500" r="11" fill="url(#gfill)"/>
<!-- swap arrows -->
<path d="M48.500 414.500 q4 -.5 5.500 3.500 M50.500 422 q4.500 .8 4.500 -2" fill="none" stroke="#d0d0d0" stroke-width="1.300"/>
<path d="M46.500 415 l3 -2.500 v4.500z M55.500 422.500 l-3.200 2 l.2 -4.500z" fill="#d0d0d0"/>
<!-- default fill/stroke icon -->
<rect x="9.500" y="453.500" width="7" height="7" fill="#4a4a4a" stroke="#e0e0e0" stroke-width="1.200"/>
<rect x="6.500" y="450.500" width="7" height="7" fill="#f2f2f2" stroke="#222" stroke-width="1"/>
<!-- color buttons -->
<rect x="7" y="469" width="54" height="16" fill="#3d3d3d"/>
<rect x="10.500" y="471.500" width="12" height="12" fill="#fff" stroke="#1c1c1c" stroke-width="1.400"/>
<rect x="28.500" y="471.500" width="12" height="12" fill="#f4f4f4" stroke="#1c1c1c" stroke-width="1.400"/>
<circle cx="34.500" cy="477.500" r="4" fill="#dcdcdc"/>
<rect x="46.500" y="471.500" width="12" height="12" fill="#fff" stroke="#1c1c1c" stroke-width="1.400"/>
<path d="M47.500 482.500 L57.500 472.500" stroke="#e8111c" stroke-width="2.400"/>
<path d="M25.500 469 v16 M43.500 469 v16" stroke="#4a4a4a" stroke-width="1"/>
<!-- draw modes -->
<rect x="7" y="492" width="54" height="15" fill="#5c5c5c"/>
<rect x="7" y="492" width="18" height="15" fill="#333"/>
<circle cx="15" cy="498.500" r="3.800" fill="#9a9a9a" stroke="#dcdcdc" stroke-width="1"/><rect x="16" y="499.500" width="5.500" height="5" fill="#b0b0b0" stroke="#dcdcdc" stroke-width=".8"/>
<circle cx="33" cy="498.500" r="4" fill="#8a8a8a" stroke="#d0d0d0" stroke-width="1.100"/><path d="M35 503.500 h3.500 v-4" fill="none" stroke="#d0d0d0" stroke-width="1.100"/>
<circle cx="51" cy="499" r="3.800" fill="#8a8a8a" stroke="#d8d8d8" stroke-width="1.100"/><rect x="51.500" y="499.500" width="4" height="3.500" fill="#5c5c5c"/>
<!-- screen mode -->
<rect x="22.500" y="520.500" width="13" height="10" fill="#666" stroke="#cfcfcf" stroke-width="1.200"/>
<rect x="28.500" y="516.500" width="13" height="10" fill="#777" stroke="#dadada" stroke-width="1.200"/>
</svg>
<!--/TOOLBAR-->
<!--FLOATS-->
<!-- small float 1 -->
<div class="panel" style="left:84px;top:149px;width:37px;height:52px;border-radius:3px 3px 0 0"><div class="phead" style="height:12px;border-radius:2px 2px 0 0"></div></div>
<svg style="left:84px;top:149px" width="37" height="52" viewBox="0 0 37 52">
<path d="M9.500 4.500 l3.500 3 l-3.500 3z M13.500 4.500 l3.500 3 l-3.500 3z" fill="#e6e6e6"/>
<path d="M26.500 5 l5 5 M31.500 5 l-5 5" stroke="#e6e6e6" stroke-width="1.500"/>
<path d="M10 16h1v4h-1z M12 16h1v4h-1z M14 16h1v4h-1z M16 16h1v4h-1z M18 16h1v4h-1z M20 16h1v4h-1z M22 16h1v4h-1z M24 16h1v4h-1z M26 16h1v4h-1z" fill="#262626"/>
<circle cx="19" cy="35" r="7" fill="#bcbcbc"/>
<circle cx="20.500" cy="35" r="7.500" fill="none" stroke="#e4e4e4" stroke-width="1.200" stroke-dasharray="24 23.100" transform="rotate(-92 20.500 35)"/>
<rect x="18" y="26" width="3.400" height="3.400" fill="#f4f4f4"/><rect x="26.300" y="33.400" width="3.400" height="3.400" fill="#f4f4f4"/><rect x="18" y="41" width="3.400" height="3.400" fill="#f4f4f4"/>
</svg>
<!-- small float 2 -->
<div class="panel" style="left:84px;top:267px;width:37px;height:78px;border-radius:3px 3px 0 0"><div class="phead" style="height:13px;border-radius:2px 2px 0 0"></div></div>
<svg style="left:84px;top:267px" width="37" height="78" viewBox="0 0 37 78">
<path d="M9 4.500 l3.500 3 l-3.500 3z M13 4.500 l3.500 3 l-3.500 3z" fill="#e6e6e6"/>
<path d="M25.500 5 l5 5 M30.500 5 l-5 5" stroke="#e6e6e6" stroke-width="1.500"/>
<path d="M9 16.500h1v4h-1z M11 16.500h1v4h-1z M13 16.500h1v4h-1z M15 16.500h1v4h-1z M17 16.500h1v4h-1z M19 16.500h1v4h-1z M21 16.500h1v4h-1z M23 16.500h1v4h-1z M25 16.500h1v4h-1z" fill="#262626"/>
<path d="M19 28 q9 -.5 9.500 6 q0 5 -5 4 q-2.500 -.5 -2.500 1.500 q0 3.500 -4.500 3.500 q-7 0 -7 -7.500 q0 -7 9.500 -7.500z" fill="#d4d4d4"/>
<circle cx="13" cy="33" r="1.500" fill="#555"/><circle cx="17.500" cy="30.800" r="1.400" fill="#555"/><circle cx="22.500" cy="31" r="1.400" fill="#555"/><circle cx="25.500" cy="34" r="1.400" fill="#555"/><circle cx="14" cy="38.500" r="1.600" fill="#555"/>
<defs><linearGradient id="qg" x1="0" y1="0" x2=".8" y2="1"><stop offset="0" stop-color="#e8e8e8"/><stop offset=".5" stop-color="#8a8a8a"/><stop offset="1" stop-color="#1e1e1e"/></linearGradient></defs>
<path d="M11.500 54.500 v15 h15.500 q-.5 -14 -15.500 -15z" fill="url(#qg)" stroke="#dedede" stroke-width="1.200"/>
</svg>
<!-- Buscatrazos -->
<div class="panel" style="left:78px;top:496px;width:218px;height:123px;border-radius:3px 3px 0 0">
 <div class="phead" style="height:12px;border-radius:2px 2px 0 0"></div>
 <div class="ptabs" style="top:12px;height:16px;background:#343434"></div>
 <div class="ptab" style="left:0;top:12px;width:65px;height:16px"></div>
</div>
<span class="ptxt" id="bt1" style="transform:scaleX(0.935);left:85px;top:510px;font-size:9.500px">Buscatrazos</span>
<span class="ptxt" id="bt2" style="transform:scaleX(0.950);left:83px;top:530px">Modos de forma:</span>
<span class="ptxt" id="bt3" style="transform:scaleX(0.908);left:83px;top:574px">Buscatrazos:</span>
<div class="abs" style="left:224px;top:549px;width:65px;height:15px;background:#555;border:1px solid #6c6c6c"></div>
<span class="ptxt" id="bt4" style="transform:scaleX(0.920);left:238px;top:551px;color:#8c8c8c">Expandir</span>
<svg style="left:78px;top:496px" width="218" height="123" viewBox="78 496 218 123">
<path d="M272 499.500 l-3.500 3 l3.500 3z M276 499.500 l-3.500 3 l3.500 3z" fill="#e6e6e6"/>
<path d="M284.500 500 l5 5 M289.500 500 l-5 5" stroke="#e6e6e6" stroke-width="1.500"/>
<path d="M278 514.500 h4.500 l-2.250 3z" fill="#dcdcdc"/><path d="M283.500 514 h7.500 M283.500 516.500 h7.500 M283.500 519 h7.500" stroke="#dcdcdc" stroke-width="1.200"/>
<!-- shape modes -->
<g stroke="#d8d8d8" stroke-width="1" fill="#9a9a9a">
<rect x="89" y="551" width="8" height="8"/><rect x="93" y="555" width="8" height="8"/>
<rect x="124" y="551" width="8" height="8" fill="#4a4a4a"/><rect x="128" y="555" width="8" height="8" fill="#4a4a4a" stroke="#777"/>
<rect x="158.500" y="551" width="8" height="8" fill="none"/><rect x="162.500" y="555" width="8" height="8" fill="none"/><rect x="162.500" y="555" width="4" height="4" stroke="none"/>
<rect x="193.500" y="551" width="8" height="8" fill="#8a8a8a"/><rect x="197.500" y="555" width="8" height="8" fill="#8a8a8a"/><rect x="197.500" y="555" width="4" height="4" fill="#4a4a4a"/>
</g>
<!-- pathfinders -->
<g stroke="#d8d8d8" stroke-width="1" fill="none">
<rect x="92" y="595" width="4" height="4"/><rect x="96.500" y="599.500" width="4" height="4"/><rect x="98" y="601" width="7" height="7"/>
<rect x="127" y="595" width="4" height="4" fill="#bbb"/><rect x="132" y="595" width="4" height="8" fill="#bbb"/><rect x="132" y="600" width="8" height="8" fill="#aaa"/>
<rect x="162" y="595" width="8" height="8" fill="#bbb"/><rect x="166.500" y="600" width="8" height="8" fill="#aaa"/>
<rect x="197" y="595" width="8" height="8" stroke="#777"/><rect x="201" y="600" width="8" height="8" stroke="#777" fill="#666"/><rect x="201" y="600" width="4" height="3.500" fill="#bbb" stroke="none"/>
<rect x="231" y="595" width="8" height="8"/><rect x="237" y="600" width="8" height="8"/><rect x="236" y="599" width="4" height="4" fill="#4a4a4a"/>
<rect x="267.500" y="595" width="8" height="8" stroke="#6a6a6a"/><path d="M276 599 h4 v9 h-9 v-4 h5z"/>
</g>
</svg>
<!--/FLOATS-->
<!--RIGHT-->
<!-- vertical scrollbar -->
<div class="abs" style="left:1228px;top:75px;width:15px;height:587px;background:#3b3b3b"></div>
<div class="abs" style="left:1228px;top:75px;width:1px;height:587px;background:#2e2e2e"></div>
<div class="abs" style="left:1230px;top:80px;width:0;height:0;border-left:5px solid transparent;border-right:5px solid transparent;border-bottom:7px solid #f0f0f0"></div>
<div class="abs" style="left:1230px;top:651px;width:0;height:0;border-left:5px solid transparent;border-right:5px solid transparent;border-top:7px solid #f0f0f0"></div>
<div class="abs" style="left:1230px;top:359px;width:12px;height:15px;background:#989898"></div>
<!-- dock -->
<div class="abs" style="left:1242px;top:56px;width:3px;height:625px;background:#2b2b2b"></div>
<div class="abs" style="left:1245px;top:56px;width:35px;height:625px;background:#484848"></div>
<div class="abs" style="left:1245px;top:56px;width:35px;height:11px;background:#363636"></div>
<div class="abs" style="left:1245px;top:156px;width:35px;height:2px;background:#303030"></div>
<svg style="left:1245px;top:56px" width="35" height="110" viewBox="1245 56 35 110">
<path d="M1273 58.500 l-3 2.500 l3 2.500z M1277 58.500 l-3 2.500 l3 2.500z" fill="#e0e0e0"/>
<path d="M1254 70h1v4h-1z M1256 70h1v4h-1z M1258 70h1v4h-1z M1260 70h1v4h-1z M1262 70h1v4h-1z M1264 70h1v4h-1z M1266 70h1v4h-1z M1268 70h1v4h-1z M1270 70h1v4h-1z" fill="#232323"/>
<!-- CC icon -->
<path d="M1256.500 96 q-5 -.5 -5 -5.500 q0 -4.500 4.500 -5.500 q1.500 -4 6 -4 q4 0 5.800 3 q6.200 .5 6.200 6 q0 5.500 -5.500 6z" fill="none" stroke="#d6d6d6" stroke-width="1.700"/><path d="M1259 92.500 q-3 -1 -1.500 -4 q2 -2.500 5 0 l3.500 3.500 q2.500 1.500 4 -1 q1 -2.500 -2 -3.500" fill="none" stroke="#d6d6d6" stroke-width="1.600"/>
<!-- dashed circle -->
<circle cx="1263.500" cy="115.500" r="5.800" fill="#c6c6c6"/><circle cx="1263.500" cy="115.500" r="7.800" fill="none" stroke="#e0e0e0" stroke-width="1.300" stroke-dasharray="2.400 1.500"/>
<!-- export -->
<path d="M1259 136 h12 v12 h-7" fill="none" stroke="#d8d8d8" stroke-width="1.400"/>
<rect x="1256.500" y="142.500" width="5" height="5" fill="#666" stroke="#d8d8d8" stroke-width="1"/><rect x="1259" y="145" width="5" height="5" fill="#666" stroke="#d8d8d8" stroke-width="1"/>
</svg>
<!-- Capas panel -->
<div class="panel" style="left:981px;top:63px;width:230px;height:182px;border-radius:3px 3px 0 0;background:#484848">
 <div class="phead" style="height:12px;background:#2f2f2f;border-radius:2px 2px 0 0"></div>
 <div class="ptabs" style="top:12px;height:14px;background:#343434"></div>
 <div class="ptab" style="left:0;top:12px;width:39px;height:14px"></div>
 <div class="ptab" style="left:40px;top:12px;width:85px;height:14px;background:#3f3f3f"></div>
 <div class="abs" style="left:216px;top:26px;width:8px;height:127px;background:#3a3a3a;border:1px solid #2c2c2c"></div>
 <div class="abs" style="left:217px;top:34px;width:5px;height:20px;background:#7f87a3"></div>
 <div class="abs" style="left:219px;top:33px;width:0;height:0;border-top:4px solid #eee;border-left:4px solid transparent"></div>
 <div class="abs" style="left:215px;top:171px;width:12px;height:8px;background:#404040;border:1px solid #333"></div>
</div>
<span class="ptxt" id="cp1" style="transform:scaleX(0.905);left:988px;top:79px">Capas</span>
<span class="ptxt" id="cp2" style="transform:scaleX(0.977);left:1027px;top:79px;color:#8a8a8a">Mesas de trabajo</span>
<svg style="left:981px;top:63px" width="228" height="190" viewBox="981 63 228 190">
<path d="M1189.500 67 l-3.500 3 l3.500 3z M1193.500 67 l-3.500 3 l3.500 3z" fill="#e6e6e6"/>
<path d="M1199.500 67.500 l5 5 M1204.500 67.500 l-5 5" stroke="#e6e6e6" stroke-width="1.500"/>
<path d="M1187.500 81.500 h4.500 l-2.250 3z" fill="#bdbdbd"/><path d="M1193.500 81.500 h11 M1193.500 84 h11" stroke="#8c8c8c" stroke-width="1.300"/>
<g fill="#333"><path d="M1205 226h1v1h-1z M1203 228h1v1h-1z M1205 228h1v1h-1z M1201 230h1v1h-1z M1203 230h1v1h-1z M1205 230h1v1h-1z M1199 232h1v1h-1z M1201 232h1v1h-1z M1203 232h1v1h-1z M1205 232h1v1h-1z"/></g>
</svg>
<!-- Alinear panel -->
<div class="panel" style="left:981px;top:86px;width:217px;height:180px;border-radius:3px 3px 0 0">
 <div class="phead" style="height:12px;background:#303030;border-radius:2px 2px 0 0"></div>
 <div class="ptabs" style="top:12px;height:16px;background:#343434"></div>
 <div class="ptab" style="left:0;top:12px;width:51px;height:16px"></div>
 <div class="abs" style="left:5px;top:78px;width:203px;height:1px;background:#3d3d3d"></div>
 <div class="abs" style="left:5px;top:129px;width:203px;height:1px;background:#3d3d3d"></div>
 <div class="abs" style="left:148px;top:134px;width:1px;height:40px;background:#3d3d3d"></div>
</div>
<span class="ptxt" id="al1" style="transform:scaleX(0.974);left:995px;top:101px;font-size:9.500px">Alinear</span>
<span class="ptxt" id="al2" style="transform:scaleX(0.939);left:986px;top:121px">Alinear objetos:</span>
<span class="ptxt" id="al3" style="transform:scaleX(0.938);left:986px;top:172px">Distribuir objetos:</span>
<span class="ptxt" id="al4" style="transform:scaleX(0.924);left:986px;top:222px">Distribuir espaciado:</span>
<span class="ptxt" id="al5" style="transform:scaleX(0.933);left:1143px;top:222px">Alinear con:</span>
<svg style="left:981px;top:86px" width="217" height="160" viewBox="981 86 217 160">
<path d="M1177 89.500 l-3.500 3 l3.500 3z M1181 89.500 l-3.500 3 l3.500 3z" fill="#e6e6e6"/>
<path d="M1187 90 l5 5 M1192 90 l-5 5" stroke="#e6e6e6" stroke-width="1.500"/>
<path d="M1181.500 104.500 h4.500 l-2.250 3z" fill="#dcdcdc"/><path d="M1187 104 h7.500 M1187 106.500 h7.500 M1187 109 h7.500" stroke="#dcdcdc" stroke-width="1.200"/>
<path d="M986.500 105 l2.500 -3 l2.500 3z M986.500 107.500 l2.500 3 l2.500 -3z" fill="none" stroke="#dcdcdc" stroke-width="1"/>
<g fill="#9a9a9a" stroke="#e0e0e0" stroke-width="1">
<!-- row 1 -->
<path d="M992.500 140.500 v14" /><rect x="994.500" y="142.500" width="6" height="4"/><rect x="994.500" y="149.500" width="10" height="4" fill="none"/>
<path d="M1032.500 140.500 v14"/><rect x="1029.500" y="142.500" width="6" height="4"/><rect x="1027.500" y="149.500" width="10" height="4" fill="#4a4a4a"/>
<path d="M1072.500 140.500 v14"/><rect x="1064.500" y="142.500" width="6" height="4"/><rect x="1060.500" y="149.500" width="10" height="4" fill="none"/>
<path d="M1106.500 141.500 h14"/><rect x="1108.500" y="143.500" width="4" height="10" fill="none"/><rect x="1114.500" y="143.500" width="4" height="6"/>
<path d="M1139.500 148 h14"/><rect x="1142.500" y="143" width="4" height="10" fill="#4a4a4a"/><rect x="1148.500" y="145" width="4" height="6"/>
<path d="M1174 154.500 h14"/><rect x="1176.500" y="142.500" width="4" height="10" fill="none"/><rect x="1182.500" y="146.500" width="4" height="6"/>
<!-- row 2 -->
<path d="M991 192.500 h15 M991 200.500 h15"/><rect x="994.500" y="192.500" width="8" height="3.500"/><rect x="994.500" y="200.500" width="8" height="3.500" fill="none"/>
<path d="M1025 194.500 h15 M1025 201.500 h15"/><rect x="1028.500" y="192.500" width="8" height="3.500"/><rect x="1028.500" y="199.500" width="8" height="3.500" fill="#4a4a4a"/>
<path d="M1058.500 196.500 h15 M1058.500 204.500 h15"/><rect x="1062.500" y="192.500" width="8" height="3.500"/><rect x="1062.500" y="200.500" width="8" height="3.500" fill="none"/>
<path d="M1108.500 190.500 v15 M1115.500 190.500 v15"/><rect x="1108.500" y="194" width="3.500" height="8" fill="none"/><rect x="1115.500" y="194" width="3.500" height="8"/>
<path d="M1144.500 190.500 v15 M1151.500 190.500 v15"/><rect x="1142.500" y="194" width="3.500" height="8" fill="#4a4a4a"/><rect x="1149.500" y="194" width="3.500" height="8"/>
<path d="M1178.500 190.500 v15 M1185.500 190.500 v15"/><rect x="1175" y="194" width="3.500" height="8"/><rect x="1182" y="194" width="3.500" height="8" fill="none"/>
</g>
<!-- bottom row partially hidden -->
<rect x="998" y="241" width="4" height="5" fill="#e0e0e0"/><path d="M1026.500 240 v6 M1029.500 240 v6" stroke="#e0e0e0" stroke-width="1"/>
<rect x="1046.500" y="239.500" width="15" height="8" fill="#6a6a6a" stroke="#333"/><path d="M1051 245 l3 -4 l3 4z" fill="#999"/>
<rect x="1062.500" y="239.500" width="53" height="8" fill="#7a7a7a" stroke="#333"/>
<path d="M1149.500 241.500 h13" stroke="#e0e0e0" stroke-width="1.200" stroke-dasharray="2 1.500"/><path d="M1153 246 l3 -3.500 l3 3.500z" fill="#ddd"/>
</svg>
<!-- Simbolos panel -->
<div class="panel" style="left:986px;top:246px;width:238px;height:192px;border-radius:3px 3px 0 0">
 <div class="phead" style="height:12px;background:#303030;border-radius:2px 2px 0 0"></div>
 <div class="ptabs" style="top:12px;height:16px;background:#343434"></div>
 <div class="ptab" style="left:0;top:12px;width:54px;height:16px;background:#3d3d3d"></div>
 <div class="ptab" style="left:54px;top:12px;width:55px;height:16px"></div>
 <div class="abs" style="left:4px;top:32px;width:229px;height:133px;background:#484848;border:1px solid #333"></div>
 <div class="abs" style="left:220px;top:33px;width:12px;height:131px;background:#3c3c3c"></div>
 <div class="abs" style="left:222px;top:38px;width:0;height:0;border-left:4px solid transparent;border-right:4px solid transparent;border-bottom:5px solid #7a7a7a"></div>
 <div class="abs" style="left:222px;top:155px;width:0;height:0;border-left:4px solid transparent;border-right:4px solid transparent;border-top:5px solid #8a8a8a"></div>
 <div class="abs" style="left:0;top:183px;width:236px;height:1px;background:#2c2c2c"></div>
 <div class="abs" style="left:0;top:184px;width:236px;height:6px;background:#3e3e3e"></div>
</div>
<span class="ptxt" id="sm1" style="transform:scaleX(0.980);left:993px;top:261px;color:#8c8c8c;font-size:9.500px">Muestras</span>
<span class="ptxt" id="sm2" style="transform:scaleX(0.986);left:1047px;top:261px;font-size:9.500px">Símbolos</span>
<!--SYMBOLS-->
<svg style="left:986px;top:246px" width="238" height="192" viewBox="986 246 238 192">
<defs><linearGradient id="sblue" x1="0" y1="0" x2="0" y2="1"><stop offset="0" stop-color="#8fbbe8"/><stop offset=".35" stop-color="#a4cdf2"/><stop offset=".5" stop-color="#4a78c0"/><stop offset=".62" stop-color="#3560ac"/><stop offset="1" stop-color="#6b98d6"/></linearGradient><linearGradient id="sor" x1="0" y1="0" x2="0" y2="1"><stop offset="0" stop-color="#fbd6a4"/><stop offset=".48" stop-color="#f2a648"/><stop offset=".5" stop-color="#e48604"/><stop offset="1" stop-color="#e07c00"/></linearGradient></defs>
<path d="M1199.500 250 l-3.500 3 l3.500 3z M1203.500 250 l-3.500 3 l3.500 3z" fill="#e6e6e6"/><path d="M1213 250.500 l5 5 M1218 250.500 l-5 5" stroke="#e6e6e6" stroke-width="1.500"/><path d="M1206 264.500 h4.500 l-2.250 3z" fill="#dcdcdc"/><path d="M1211.500 264 h7.500 M1211.500 266.500 h7.500 M1211.500 269 h7.500" stroke="#bdbdbd" stroke-width="1.200"/><rect x="992" y="281" width="30" height="30" fill="#e6e6e6"/><rect x="1023" y="281" width="30" height="30" fill="#e6e6e6"/><rect x="1054" y="281" width="30" height="30" fill="#e6e6e6"/><rect x="1085" y="281" width="30" height="30" fill="#e6e6e6"/><rect x="1116" y="281" width="30" height="30" fill="#e6e6e6"/><rect x="1147" y="281" width="30" height="30" fill="#e6e6e6"/><rect x="992" y="312" width="30" height="30" fill="#e6e6e6"/><rect x="994" y="289" width="26" height="14" fill="url(#sblue)"/><rect x="994" y="323" width="26" height="2.600" fill="#111"/><rect x="994" y="326.300" width="26" height="2.400" fill="#111"/><rect x="994" y="329.400" width="26" height="2.400" fill="#111"/><g fill="#000"><circle cx="1038.500" cy="296" r="5"/><circle cx="1040" cy="304" r="3.600"/><ellipse cx="1036" cy="299" rx="4" ry="3"/><circle cx="1028.500" cy="293.500" r="2.200"/><circle cx="1037.500" cy="285.500" r="1.600"/><circle cx="1047.500" cy="287.200" r="1.700"/><circle cx="1031" cy="305.500" r="2.200"/><circle cx="1031.500" cy="298" r="1.300"/><path d="M1029 293.500 L1036 294.500 L1036 297 Z M1041 293 L1047.500 287 L1046 292 L1043 296Z M1037.500 286 L1039 292 L1037 292Z M1032 305 L1037 301 L1038 303Z M1043 297 l3 1.500 l-3 .5z"/><circle cx="1045.500" cy="292" r="1.300"/><circle cx="1043.500" cy="299" r=".9"/><circle cx="1027" cy="308.500" r=".7"/></g><circle cx="1069.200" cy="296.300" r="13" fill="#f4ab44"/><circle cx="1069.200" cy="296.300" r="11.800" fill="#f7c078"/><circle cx="1069.200" cy="296.300" r="10.500" fill="url(#sor)"/><g fill="#111"><rect x="1091.500" y="285" width="9" height="1.800"/><rect x="1088.600" y="288.500" width="1.800" height="8.500"/></g><rect x="1088.700" y="291" width="1.600" height="3" fill="#c89a30"/><g stroke="#555" stroke-width=".8" fill="none"><path d="M1087.500 285.500 h3 M1089 284 v3 M1109 284.500 v3 h3 M1110.500 286 l1.500 -1.500 M1088 306 h3 v3 M1089.500 307.500 l-1.500 -1.500 M1112 306 h-3 v3 M1110.500 307.500 l1.500 -1.500"/></g><circle cx="1130.8" cy="296.3" r="10.500" fill="none" stroke="#a2a2a2" stroke-width="4.800"/><circle cx="1130.8" cy="296.3" r="10.500" fill="none" stroke="#6a6a6a" stroke-width="4.800" stroke-dasharray="3.300 4.950"/><circle cx="1130.8" cy="296.3" r="12.800" fill="none" stroke="#666" stroke-width=".6"/><circle cx="1130.8" cy="296.3" r="8.100" fill="none" stroke="#666" stroke-width=".6"/><circle cx="1161.6" cy="296.6" r="9.500" fill="#ef8b7c"/><path d="M1164.5 296.0 L1172.7 296.2 L1175.1 298.0 L1172.4 299.2 L1164.4 297.8 Z M1164.6 296.7 L1171.3 298.4 L1173.4 300.6 L1170.5 301.0 L1164.0 298.4 Z M1164.5 297.3 L1171.8 301.0 L1173.2 303.7 L1170.2 303.7 L1163.6 298.9 Z M1164.3 298.0 L1169.6 302.5 L1170.5 305.3 L1167.7 304.4 L1163.0 299.2 Z M1163.9 298.5 L1168.9 305.0 L1169.0 308.0 L1166.3 306.7 L1162.4 299.5 Z M1163.4 299.0 L1166.2 305.3 L1165.8 308.3 L1163.7 306.3 L1161.7 299.6 Z M1162.8 299.3 L1164.5 307.3 L1163.3 310.1 L1161.4 307.7 L1161.1 299.6 Z M1162.2 299.5 L1162.0 306.5 L1160.4 308.9 L1159.2 306.2 L1160.4 299.4 Z M1161.5 299.6 L1159.6 307.5 L1157.3 309.5 L1156.6 306.5 L1159.8 299.0 Z M1160.9 299.5 L1157.7 305.7 L1155.1 307.2 L1155.3 304.2 L1159.3 298.6 Z M1160.2 299.3 L1155.0 305.5 L1152.1 306.3 L1152.8 303.4 L1159.0 298.0 Z M1159.7 298.9 L1154.1 303.1 L1151.2 303.3 L1152.6 300.8 L1158.7 297.4 Z M1159.2 298.4 L1151.8 301.8 L1148.8 301.2 L1150.7 298.9 L1158.6 296.7 Z M1158.9 297.8 L1152.0 299.2 L1149.3 298.1 L1151.7 296.4 L1158.6 296.1 Z M1158.7 297.2 L1150.5 297.0 L1148.1 295.2 L1150.8 294.0 L1158.8 295.4 Z M1158.6 296.5 L1151.9 294.8 L1149.8 292.6 L1152.7 292.2 L1159.2 294.8 Z M1158.7 295.9 L1151.4 292.2 L1150.0 289.5 L1153.0 289.5 L1159.6 294.3 Z M1158.9 295.2 L1153.6 290.7 L1152.7 287.9 L1155.5 288.8 L1160.2 294.0 Z M1159.3 294.7 L1154.3 288.2 L1154.2 285.2 L1156.9 286.5 L1160.8 293.7 Z M1159.8 294.2 L1157.0 287.9 L1157.4 284.9 L1159.5 286.9 L1161.5 293.6 Z M1160.4 293.9 L1158.7 285.9 L1159.9 283.1 L1161.8 285.5 L1162.1 293.6 Z M1161.0 293.7 L1161.2 286.7 L1162.8 284.3 L1164.0 287.0 L1162.8 293.8 Z M1161.7 293.6 L1163.6 285.7 L1165.9 283.7 L1166.6 286.7 L1163.4 294.2 Z M1162.3 293.7 L1165.5 287.5 L1168.1 286.0 L1167.9 289.0 L1163.9 294.6 Z M1163.0 293.9 L1168.2 287.7 L1171.1 286.9 L1170.4 289.8 L1164.2 295.2 Z M1163.5 294.3 L1169.1 290.1 L1172.0 289.9 L1170.6 292.4 L1164.5 295.8 Z M1164.0 294.8 L1171.4 291.4 L1174.4 292.0 L1172.5 294.3 L1164.6 296.5 Z M1164.3 295.4 L1171.2 294.0 L1173.9 295.1 L1171.5 296.8 L1164.6 297.1 Z " fill="#ee7b6a"/><circle cx="1161.6" cy="296.6" r="4" fill="#c9a032"/><circle cx="1161.6" cy="296.6" r="2.800" fill="#ecd060"/><g fill="#dcdcdc"><rect x="995" y="416" width="1.600" height="9"/><rect x="997.600" y="416" width="1.600" height="9"/><path d="M1000.500 416.500 l1.500 -.5 l3.500 8.500 l-1.500 .6z"/><path d="M1006 424 h5 l-2.500 2.500z"/></g><g stroke="#6c6c6c" fill="none" stroke-width="1.300"><path d="M1085.500 417 v4 h6"/><path d="M1089.500 418 l3 3 l-3 3" /><path d="M1108 421 h4 M1116 421 h4 M1112.500 417.500 q-4.500 0 -4.500 3.500 t4.500 3.500 M1116 417.500 q4.500 0 4.500 3.500 t-4.500 3.500 M1114 415 v3 M1114 424 v3"/><rect x="1132.500" y="416.500" width="9" height="9"/><path d="M1134.500 419.500 h5 M1134.500 422.500 h5" stroke-width="1"/></g><path d="M1158 416 h10 v10 h-4.500 v-5.500 h-5.500z" fill="#e6e6e6"/><path d="M1158 421.500 l4.500 4.500 h-4.500z" fill="#e6e6e6" opacity=".0"/><path d="M1158.500 421 l4.500 4.500" stroke="#e6e6e6" stroke-width="1.200"/><g fill="#6c6c6c"><rect x="1182" y="418" width="9" height="1.400"/><rect x="1185" y="416.300" width="3" height="1.700"/><path d="M1183 420.300 h7 l-.6 6 h-5.800z"/></g><g fill="#2c2c2c"><path d="M1220 419h1v1h-1z M1218 421h1v1h-1z M1220 421h1v1h-1z M1216 423h1v1h-1z M1218 423h1v1h-1z M1220 423h1v1h-1z M1214 425h1v1h-1z M1216 425h1v1h-1z M1218 425h1v1h-1z M1220 425h1v1h-1z"/></g><path d="M1095 432h1v3.500h-1z M1097 432h1v3.500h-1z M1099 432h1v3.500h-1z M1101 432h1v3.500h-1z M1103 432h1v3.500h-1z M1105 432h1v3.500h-1z M1107 432h1v3.500h-1z M1109 432h1v3.500h-1z M1111 432h1v3.500h-1z" fill="#1e1e1e"/></svg>
<!--/SYMBOLS-->
<!--/RIGHT-->
<div class="abs" style="left:0;top:24px;width:1px;height:655px;background:#343434"></div>
<!--STATUS-->
<div class="abs" style="left:69px;top:662px;width:1174px;height:17px;background:#393939;border-top:1px solid #2a2a2a"></div>
<div class="abs" style="left:0;top:679px;width:1280px;height:2px;background:#3e3e40"></div>
<div class="abs" style="left:114px;top:679px;width:51px;height:2px;background:#bcbcbc"></div>
<div class="abs" style="left:170px;top:679px;width:57px;height:2px;background:#8a8a8a"></div>
<div class="abs" style="left:289px;top:679px;width:56px;height:2px;background:#c4c4c4"></div>
<div class="abs" style="left:347px;top:679px;width:55px;height:2px;background:#bdbdbd"></div>
<div class="abs" style="left:405px;top:679px;width:55px;height:2px;background:#b8b8b8"></div>
<div class="abs" style="left:517px;top:679px;width:395px;height:2px;background:#4aa3c4"></div>
<div class="abs" style="left:20px;top:677px;width:26px;height:8px;border-radius:13px 13px 0 0;background:#5f86ad"></div>
<div class="inp" style="left:125px;top:663px;width:51px;height:15px;background:#a2a2a2"></div>
<span class="abs" id="st1" style="left:128px;top:665px;font-size:9.500px;color:#111;line-height:12px;transform:scaleX(.9);transform-origin:0 50%">100%</span>
<div class="btn" style="left:175px;top:663px;width:14px;height:15px;background:#555"></div><div class="tri-d" style="left:178px;top:669px;border-left-width:3.500px;border-right-width:3.500px;border-top-width:4px"></div>
<div class="inp" style="left:230px;top:663px;width:41px;height:15px;background:#a2a2a2"></div>
<span class="abs" style="left:233px;top:665px;font-size:9.500px;color:#111;line-height:12px;font-weight:bold">1</span>
<div class="btn" style="left:270px;top:663px;width:14px;height:15px;background:#555"></div><div class="tri-d" style="left:273px;top:669px;border-left-width:3.500px;border-right-width:3.500px;border-top-width:4px"></div>
<svg style="left:69px;top:662px" width="1174" height="17" viewBox="69 662 1174 17">
<g fill="#666"><rect x="75" y="666" width="19" height="9" rx="2" fill="#4c4c4c" stroke="#5c5c5c"/><circle cx="80" cy="670.500" r="2"/><circle cx="88" cy="670.500" r="2"/></g>
<path d="M103.500 668 v7 h9 v-3" fill="none" stroke="#e0e0e0" stroke-width="1.300"/><path d="M107 672 q1 -4 5 -4 v-2 l4 3.200 l-4 3.200 v-2 q-3 0 -5 1.600z" fill="#e0e0e0"/>
<g fill="#6c6c6c"><rect x="198" y="667" width="1.500" height="7"/><path d="M205 667 v7 l-5 -3.500z"/><path d="M220 667 v7 l-5 -3.500z"/><path d="M294 667 v7 l5 -3.500z"/><path d="M307 667 v7 l5 -3.500z"/><rect x="313" y="667" width="1.500" height="7"/></g>
<path d="M322.500 664 v13 M527.500 664 v13" stroke="#2b2b2b"/>
<path d="M518 666.500 v8 l5.500 -4z" fill="#eee"/>
<path d="M540 666.500 v8 l-5.500 -4z" fill="#eee"/>
<rect x="530" y="663" width="698" height="16" fill="#333"/>
<path d="M540 666.500 v8 l-5.500 -4z" fill="#eee"/>
<rect x="868" y="664" width="15" height="14" fill="#9a9a9a"/>
<path d="M1216 666.500 v8 l6 -4z" fill="#eee"/>
<rect x="1228.500" y="663" width="14" height="15" fill="#3b3b3b" stroke="#2c2c2c"/>
</svg>
<span class="abs" id="st2" style="left:398px;top:665px;font-size:9px;color:#e6e6e6;line-height:12px;font-weight:bold;letter-spacing:-.2px">Selección</span>
<!--/STATUS-->
</div>
</body>
</html>
